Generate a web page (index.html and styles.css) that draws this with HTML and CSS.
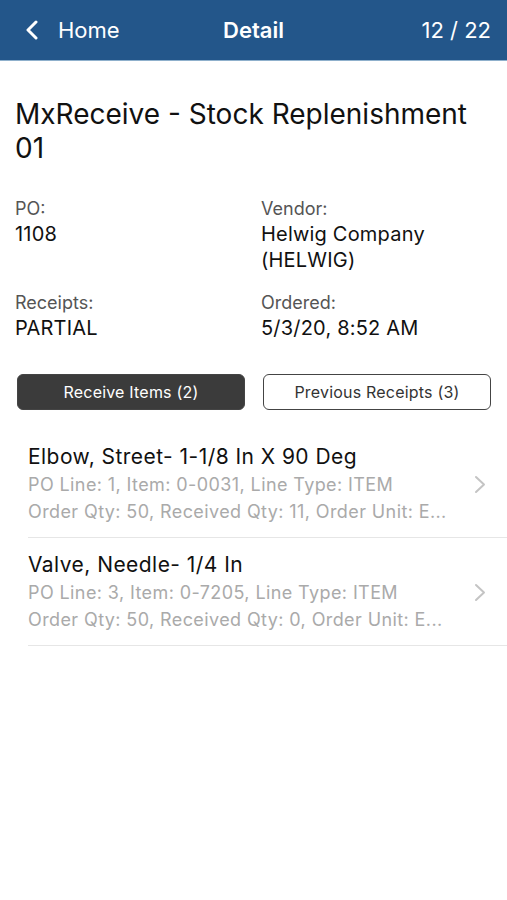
FILE: index.html
```html
<!DOCTYPE html>
<html lang="en">
<head>
    <meta charset="UTF-8">
    <meta name="viewport" content="width=device-width, initial-scale=1.0">
    <title>Detail</title>
    <link rel="stylesheet" href="styles.css">
</head>
<body>
    <header class="navbar">
        <div class="nav-back">
            <svg class="back-icon" width="14" height="20" viewBox="0 0 14 20">
                <path d="M11 2 L3 10 L11 18" fill="none" stroke="#fff" stroke-width="3" stroke-linecap="round" stroke-linejoin="round"/>
            </svg>
            <span>Home</span>
        </div>
        <div class="nav-title">Detail</div>
        <div class="nav-count">12 / 22</div>
    </header>

    <main class="content">
        <h1 class="title">MxReceive - Stock Replenishment 01</h1>

        <div class="fields">
            <div class="field">
                <div class="field-label">PO:</div>
                <div class="field-value">1108</div>
            </div>
            <div class="field">
                <div class="field-label">Vendor:</div>
                <div class="field-value">Helwig Company (HELWIG)</div>
            </div>
            <div class="field">
                <div class="field-label">Receipts:</div>
                <div class="field-value">PARTIAL</div>
            </div>
            <div class="field">
                <div class="field-label">Ordered:</div>
                <div class="field-value">5/3/20, 8:52 AM</div>
            </div>
        </div>

        <div class="tabs">
            <button class="tab active">Receive Items (2)</button>
            <button class="tab">Previous Receipts (3)</button>
        </div>
    </main>

    <ul class="items">
        <li class="item">
            <div class="item-text">
                <div class="item-title">Elbow, Street- 1-1/8 In X 90 Deg</div>
                <div class="item-sub">PO Line: 1, Item: 0-0031, Line Type: ITEM</div>
                <div class="item-sub">Order Qty: 50, Received Qty: 11, Order Unit: E...</div>
            </div>
            <svg class="chevron" width="12" height="19" viewBox="0 0 12 19">
                <path d="M2 2 L10 9.5 L2 17" fill="none" stroke="#c4c4c4" stroke-width="2" stroke-linecap="round" stroke-linejoin="round"/>
            </svg>
        </li>
        <li class="item">
            <div class="item-text">
                <div class="item-title">Valve, Needle- 1/4 In</div>
                <div class="item-sub">PO Line: 3, Item: 0-7205, Line Type: ITEM</div>
                <div class="item-sub">Order Qty: 50, Received Qty: 0, Order Unit: E...</div>
            </div>
            <svg class="chevron" width="12" height="19" viewBox="0 0 12 19">
                <path d="M2 2 L10 9.5 L2 17" fill="none" stroke="#c4c4c4" stroke-width="2" stroke-linecap="round" stroke-linejoin="round"/>
            </svg>
        </li>
    </ul>
</body>
</html>
```

FILE: styles.css
```css
body {
    margin: 0;
    padding: 0;
    font-family: Inter, 'Noto Sans', sans-serif;
    background: #fff;
    color: #111;
}

.navbar {
    height: 60px;
    background: #23568a;
    border-bottom: 1px solid #8fb0cc;
    color: #fff;
    display: flex;
    align-items: center;
    justify-content: space-between;
    padding: 0 16px 0 25px;
    font-size: 22px;
    position: relative;
}

.nav-back {
    display: flex;
    align-items: center;
    gap: 19px;
}

.nav-title {
    position: absolute;
    left: 50%;
    transform: translateX(-50%);
    font-weight: 600;
}

.content {
    padding: 36px 16px 0 15px;
}

.title {
    margin: 0;
    font-size: 28px;
    line-height: 34px;
    font-weight: 400;
    color: #111;
}

.fields {
    display: grid;
    grid-template-columns: 246px 1fr;
    row-gap: 18px;
    margin-top: 32px;
}

.field-label {
    font-size: 18px;
    line-height: 24px;
    color: #555;
}

.field-value {
    font-size: 20px;
    line-height: 26px;
    letter-spacing: 0.2px;
    color: #111;
}

.tabs {
    display: grid;
    grid-template-columns: 228px 228px;
    justify-content: space-between;
    margin: 33px 0 0 2px;
}

.tab {
    height: 36px;
    border: 1px solid #444;
    border-radius: 6px;
    background: #fff;
    color: #333;
    font-family: inherit;
    font-size: 16px;
    letter-spacing: 0.2px;
    padding: 0;
}

.tab.active {
    background: #3b3b3b;
    color: #fff;
}

.items {
    list-style: none;
    margin: 20px 0 0 28px;
    padding: 0;
}

.item {
    display: flex;
    align-items: center;
    padding: 13px 21px 12px 0;
    border-bottom: 1px solid #e6e6e6;
}

.item-text {
    flex: 1;
    min-width: 0;
}

.item-title {
    font-size: 21px;
    line-height: 28px;
    letter-spacing: 0.45px;
    color: #111;
}

.item-sub {
    font-size: 18px;
    line-height: 27px;
    letter-spacing: 0.4px;
    color: #aaa;
    white-space: nowrap;
}

.chevron {
    flex-shrink: 0;
}
```
